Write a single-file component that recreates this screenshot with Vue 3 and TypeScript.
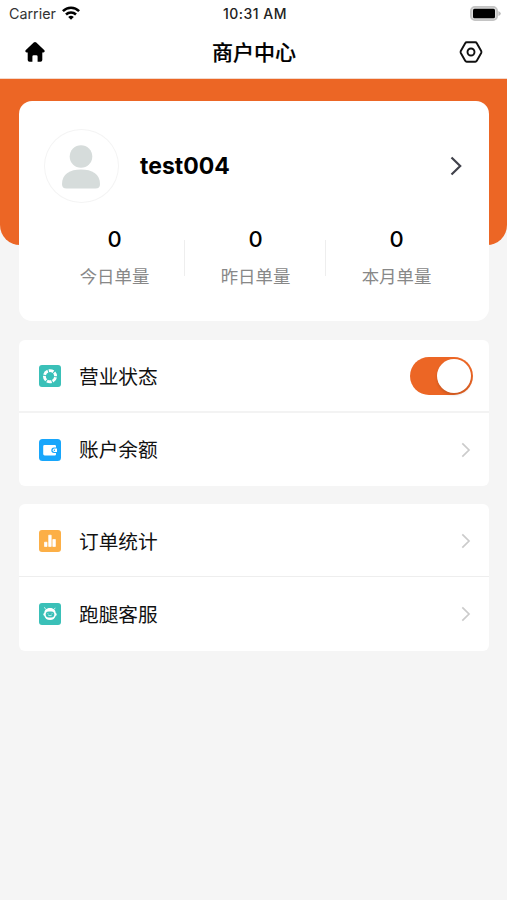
<script setup lang="ts">
import { ref } from 'vue'

type IconName = 'status' | 'wallet' | 'chart' | 'service'

interface MenuItem {
  icon: IconName
  label: string
  toggle?: boolean
}

const stats = [
  { value: 0, label: '今日单量' },
  { value: 0, label: '昨日单量' },
  { value: 0, label: '本月单量' },
]

const groups: MenuItem[][] = [
  [
    { icon: 'status', label: '营业状态', toggle: true },
    { icon: 'wallet', label: '账户余额' },
  ],
  [
    { icon: 'chart', label: '订单统计' },
    { icon: 'service', label: '跑腿客服' },
  ],
]

const open = ref(true)
</script>

<template>
  <div class="page">
    <header class="top">
      <div class="status-bar">
        <div class="carrier">
          <span>Carrier</span>
          <svg class="wifi" width="18" height="14" viewBox="0 0 18 14">
            <g fill="none" stroke="#000" stroke-width="2.5">
              <path d="M.9 5.2C5.4.6 12.600.6 17.100 5.200" />
              <path d="M4 8.500C6.800 5.700 11.200 5.700 14 8.500" />
            </g>
            <path d="M6.200 10.900Q9 8.500 11.800 10.900L9 13.800Z" />
          </svg>
        </div>
        <div class="time">10:31 AM</div>
        <svg class="battery" width="31" height="15" viewBox="0 0 31 15">
          <rect x=".9" y=".9" width="26.200" height="13.200" rx="4" fill="#ddd" stroke="#c4c4c4" stroke-width="1.800" />
          <rect x="3" y="2.700" width="22" height="9.600" rx="1.500" />
          <path d="M28.400 5Q30.800 6 30.800 7.500T28.400 10Z" fill="#bcbcbc" />
        </svg>
      </div>
      <nav class="nav">
        <svg class="home" width="20" height="20" viewBox="0 0 20 20">
          <path d="M8.700.5Q10-.4 11.300.5L19.400 8.300Q20.300 10.200 18.400 10.400H17.300V18Q17.300 19.800 15.500 19.800H12.600V14.600Q12.600 13.300 11.300 13.300H8.700Q7.400 13.300 7.400 14.600V19.800H4.500Q2.700 19.800 2.700 18V10.400H1.600Q-.3 10.200.6 8.300Z" />
        </svg>
        <h1>商户中心</h1>
        <svg class="settings" width="24" height="22" viewBox="0 0 24 22" fill="none" stroke="#111" stroke-width="1.900" stroke-linejoin="round">
          <path d="M7.700 1.300H16.300Q17.300 1.300 17.800 2.200L22.200 10Q22.700 11 22.200 12L17.800 19.800Q17.300 20.700 16.300 20.700H7.700Q6.700 20.700 6.200 19.800L1.800 12Q1.300 11 1.800 10L6.200 2.200Q6.700 1.300 7.700 1.300Z" />
          <circle cx="12" cy="11" r="3.500" />
        </svg>
      </nav>
    </header>

    <main class="content">
      <section class="hero">
        <div class="banner"></div>
        <div class="card">
          <div class="profile">
            <div class="avatar">
              <svg width="38" height="44" viewBox="0 0 38 44" fill="#d6dcdb">
                <circle cx="19" cy="11.500" r="11.300" />
                <path d="M0 39C0 29 8 24.500 19 24.500S38 29 38 39Q38 43.500 33.500 43.500H4.500Q0 43.500 0 39Z" />
              </svg>
            </div>
            <strong class="name">test004</strong>
            <svg class="enter" width="12" height="20" viewBox="0 0 12 20" fill="none" stroke="#41424b" stroke-width="2.200">
              <path d="M1.500 1.500L10.200 10L1.500 18.500" />
            </svg>
          </div>
          <div class="stats">
            <div v-for="stat in stats" :key="stat.label" class="stat">
              <span class="value">{{ stat.value }}</span>
              <span class="label">{{ stat.label }}</span>
            </div>
          </div>
        </div>
      </section>

      <section v-for="(group, index) in groups" :key="index" class="group" :class="{ toggled: index === 0 }">
        <div v-for="item in group" :key="item.label" class="row">
          <svg class="icon" width="22" height="22" viewBox="0 0 22 22">
            <template v-if="item.icon === 'status'">
              <rect width="22" height="22" rx="3" fill="#3ac0b8" />
              <circle cx="11" cy="11.200" r="5.600" fill="none" stroke="#fff" stroke-width="2.900" stroke-dasharray="4.864 1" stroke-dashoffset="-1" />
            </template>
            <template v-else-if="item.icon === 'wallet'">
              <rect width="22" height="22" rx="3.500" fill="#18a6fb" />
              <path d="M5.600 6H15.800Q17 6 17 7.200V8.500H15Q12.300 8.700 12.300 11.300T15 14.100H17V15.300Q17 16.500 15.800 16.500H5.600Q4.200 16.500 4.200 15.100V7.400Q4.200 6 5.600 6Z" fill="#fff" />
              <path d="M15.400 9.600H18V13H15.400Q13.700 13 13.700 11.300T15.400 9.600Z" fill="#fff" />
              <circle cx="15.400" cy="11.300" r=".7" fill="#18a6fb" />
            </template>
            <template v-else-if="item.icon === 'chart'">
              <rect width="22" height="22" rx="3" fill="#fcaf46" />
              <path d="M5.500 12.200H8V16.500H5.500ZM9.700 5.200H12.200V16.500H9.700ZM13.800 9.500H16.400V16.500H13.800Z" fill="#fff" stroke="#fff" stroke-width=".7" stroke-linejoin="round" />
            </template>
            <template v-else>
              <rect width="22" height="22" rx="3" fill="#3ac0b8" />
              <path d="M6.700 6.300L5.400 4.200M15.200 6.300L16.200 4.800" stroke="#fff" stroke-width=".8" />
              <path d="M11 5.100C15 5.100 16.500 7.500 16.700 10Q17.700 10.300 17.700 11.400T16.700 12.700C15.900 15.500 14 17 11 17S6.100 15.500 5.300 12.700Q4.300 12.400 4.300 11.400T5.300 10C5.500 7.500 7 5.100 11 5.100Z" fill="#fff" />
              <rect x="6.700" y="8.600" width="8.600" height="5.800" rx="2.900" fill="#3ac0b8" />
              <path d="M8.900 10.300V11M13.100 10.300V11M9.100 12Q11 13.500 12.900 12" fill="none" stroke="#fff" stroke-width=".7" />
            </template>
          </svg>
          <span class="text">{{ item.label }}</span>
          <button v-if="item.toggle" class="switch" :class="{ on: open }" role="switch" :aria-checked="open" @click="open = !open">
            <span class="knob"></span>
          </button>
          <svg v-else class="arrow" width="10" height="16" viewBox="0 0 10 16" fill="none" stroke="#cbcbcb" stroke-width="1.700">
            <path d="M1.300 1.300L8 8L1.300 14.700" />
          </svg>
        </div>
      </section>
    </main>
  </div>
</template>

<style>
body {
  background: #f5f5f5;
}
</style>

<style scoped>
.page {
  min-height: 900px;
  background: #f5f5f5;
  color: #111;
  font-family: Inter, 'Noto Sans CJK SC', sans-serif;
}

.top {
  box-sizing: border-box;
  height: 79px;
  border-bottom: 1px solid #f3d9cc;
  background: #fff;
}

.status-bar {
  display: grid;
  grid-template-columns: 1fr auto 1fr;
  align-items: center;
  height: 27px;
  padding: 0 6px 0 9px;
  font-size: 14px;
}

.carrier {
  display: flex;
  align-items: center;
  gap: 6px;
  color: #333;
  font-size: 14.3px;
}

.wifi {
  margin-top: -2px;
}

.time {
  font-size: 14px;
  font-weight: 550;
  letter-spacing: 0.5px;
  color: #222;
}

.battery {
  justify-self: end;
  margin-top: -1px;
}

.nav {
  display: grid;
  grid-template-columns: 1fr auto 1fr;
  align-items: center;
  height: 50px;
  padding: 0 24px 0 25px;
}

h1 {
  margin: 2px 0 0;
  font-size: 21px;
  line-height: 30px;
  font-weight: 500;
  color: #000;
  -webkit-text-stroke: 0.2px #000;
}

.settings {
  justify-self: end;
}

.hero {
  display: grid;
}

.banner,
.card {
  grid-area: 1 / 1;
}

.banner {
  height: 166px;
  border-radius: 0 0 20px 20px;
  background: #ec6625;
}

.card {
  box-sizing: border-box;
  height: 220px;
  margin: 22px 18px 0 19px;
  padding: 28px 25px 0;
  border-radius: 13px;
  background: #fff;
}

.profile {
  display: flex;
  align-items: center;
  height: 74px;
}

.avatar {
  display: flex;
  align-items: center;
  justify-content: center;
  box-sizing: border-box;
  width: 75px;
  height: 74px;
  border: 1px solid #f4f4f4;
  border-radius: 50%;
}

.avatar svg {
  margin: 2px 1px 0 0;
}

.name {
  flex: 1;
  margin-left: 21px;
  font-size: 23px;
  line-height: 30px;
  font-weight: 650;
  color: #000;
}

.enter {
  margin-right: 2px;
}

.stats {
  display: grid;
  grid-template-columns: repeat(3, 1fr);
  margin: 22px -3px 0 0;
}

.stat {
  display: flex;
  flex-direction: column;
  align-items: center;
  background: linear-gradient(#eee, #eee) right 15px / 1px 36px no-repeat;
}

.stat:last-child {
  background: none;
}

.value {
  font-size: 22px;
  line-height: 28px;
  font-weight: 500;
  color: #000;
}

.label {
  margin-top: 11px;
  font-size: 17.4px;
  line-height: 26px;
  color: #888;
}

.group {
  margin: 18px 18px 0 19px;
  border-radius: 6px;
  background: #fff;
}

.group.toggled {
  margin-top: 19px;
}

.row {
  display: flex;
  align-items: center;
  box-sizing: border-box;
  height: 72px;
  padding: 2px 18px 0 20px;
}

.row + .row {
  height: 75px;
  padding-top: 0;
  border-top: 1px solid #eee;
}

.toggled .row {
  height: 71px;
  padding: 1px 16px 0 20px;
}

.toggled .row + .row {
  height: 75px;
  padding: 0 18px 0 20px;
  border-top: 2px solid #f3f3f3;
}

.text {
  flex: 1;
  margin: 1px 0 0 18px;
  font-size: 19.7px;
  line-height: 30px;
}

.switch {
  display: flex;
  align-items: center;
  width: 63px;
  height: 38px;
  padding: 2px;
  border: 0;
  border-radius: 19px;
  background: #ddd;
}

.switch.on {
  justify-content: flex-end;
  background: #ec6625;
}

.knob {
  width: 34px;
  height: 34px;
  border-radius: 50%;
  background: #fff;
  box-shadow: 0 2px 3px rgba(0, 0, 0, 0.15);
}
</style>
